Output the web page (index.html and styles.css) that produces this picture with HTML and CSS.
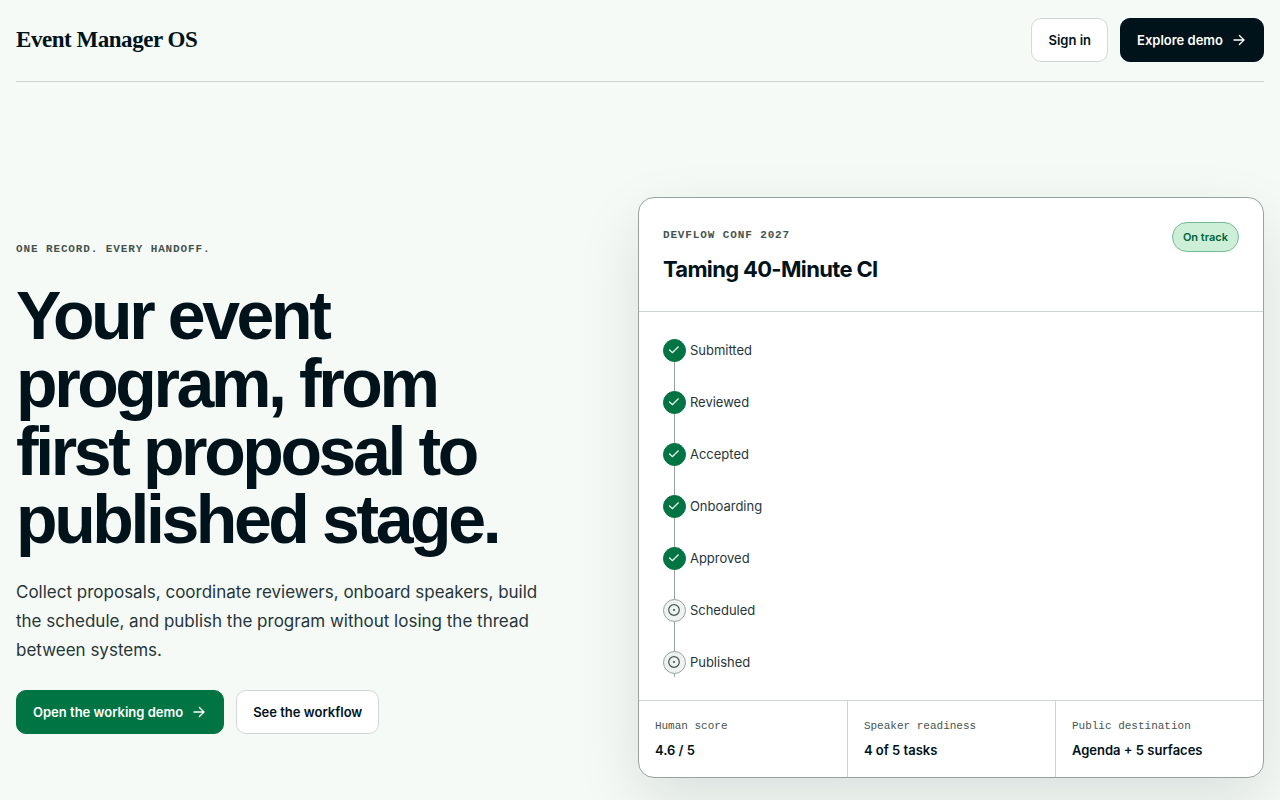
FILE: index.html
```html
<!DOCTYPE html>
<html lang="en">
<head>
<meta charset="utf-8">
<meta name="viewport" content="width=device-width, initial-scale=1">
<title>Event Manager OS</title>
<link rel="stylesheet" href="styles.css">
</head>
<body>
<svg class="sprite" aria-hidden="true">
  <symbol id="arrow" viewBox="0 0 16 16"><path d="M3 8h10M8.4 3.5 13 8l-4.6 4.5"/></symbol>
  <symbol id="check" viewBox="0 0 14 14"><path d="m2.6 7 2.7 2.7 6-5.9"/></symbol>
  <symbol id="target" viewBox="0 0 14 14"><circle cx="7" cy="7" r="5.3"/><circle cx="7" cy="7" r=".5"/></symbol>
</svg>
<header class="site-header">
  <a class="brand" href="#">Event Manager OS</a>
  <nav class="actions" aria-label="Account">
    <a class="button" href="#signin">Sign in</a>
    <a class="button button-dark" href="#demo">Explore demo <svg class="arrow" aria-hidden="true"><use href="#arrow"/></svg></a>
  </nav>
</header>
<main class="hero">
  <section class="intro">
    <p class="eyebrow">ONE RECORD. EVERY HANDOFF.</p>
    <h1 class="headline">Your event program, from first proposal to published stage.</h1>
    <p class="lead">Collect proposals, coordinate reviewers, onboard speakers, build the schedule, and publish the program without losing the thread between systems.</p>
    <div class="actions">
      <a class="button button-green" href="#demo">Open the working demo <svg class="arrow" aria-hidden="true"><use href="#arrow"/></svg></a>
      <a class="button" href="#workflow">See the workflow</a>
    </div>
  </section>
  <article class="card">
    <header class="card-header">
      <div>
        <p class="eyebrow">DEVFLOW CONF 2027</p>
        <h2 class="card-title">Taming 40-Minute CI</h2>
      </div>
      <span class="badge">On track</span>
    </header>
    <ol class="steps">
      <li class="step"><span class="marker marker-done"><svg class="glyph"><use href="#check"/></svg></span>Submitted</li>
      <li class="step"><span class="marker marker-done"><svg class="glyph"><use href="#check"/></svg></span>Reviewed</li>
      <li class="step"><span class="marker marker-done"><svg class="glyph"><use href="#check"/></svg></span>Accepted</li>
      <li class="step"><span class="marker marker-done"><svg class="glyph"><use href="#check"/></svg></span>Onboarding</li>
      <li class="step"><span class="marker marker-done"><svg class="glyph"><use href="#check"/></svg></span>Approved</li>
      <li class="step"><span class="marker"><svg class="glyph"><use href="#target"/></svg></span>Scheduled</li>
      <li class="step"><span class="marker"><svg class="glyph"><use href="#target"/></svg></span>Published</li>
    </ol>
    <dl class="facts">
      <div class="fact"><dt>Human score</dt><dd>4.6 / 5</dd></div>
      <div class="fact"><dt>Speaker readiness</dt><dd>4 of 5 tasks</dd></div>
      <div class="fact"><dt>Public destination</dt><dd>Agenda + 5 surfaces</dd></div>
    </dl>
  </article>
</main>
</body>
</html>
```
FILE: styles.css
```css
:root {
  --ink: #00121a;
  --body: #26353a;
  --muted: #46544f;
  --line: #ccd3d0;
  --line-strong: #98a3a0;
  --green: #007442;
  --page: #f5faf6;
  --sans: Inter, "Liberation Sans", sans-serif;
  --display: "Liberation Sans", Arial, sans-serif;
  --mono: "Liberation Mono", monospace;
}
* { box-sizing: border-box; }
body {
  margin: 0;
  padding: 0 16px;
  background: var(--page);
  color: var(--ink);
  font-family: var(--sans);
}
h1, h2, p, ol, dl, dd { margin: 0; padding: 0; }
.sprite { display: none; }

.site-header {
  display: flex;
  align-items: center;
  justify-content: space-between;
  padding: 18px 0 19px;
  border-bottom: 1px solid var(--line);
}
.brand {
  color: var(--ink);
  font: bold 23px/32px "Liberation Serif", serif;
  letter-spacing: -0.02em;
  text-decoration: none;
}
.actions { display: flex; flex-wrap: wrap; gap: 12px; }
.button {
  display: inline-flex;
  align-items: center;
  gap: 8px;
  min-height: 44px;
  padding: 0 16px;
  border: 1px solid #d3d9d8;
  border-radius: 10px;
  background: #fff;
  color: var(--ink);
  font-size: 13px;
  font-weight: 600;
  line-height: 20px;
  text-decoration: none;
}
.button-dark { background: var(--ink); border-color: var(--ink); color: #fff; }
.button-green { background: var(--green); border-color: var(--green); color: #fff; }
.arrow, .glyph { fill: none; stroke: currentColor; stroke-linecap: round; stroke-linejoin: round; }
.arrow { width: 16px; height: 16px; stroke-width: 1.3; }
.glyph { width: 14px; height: 14px; stroke-width: 1.2; }

.hero {
  display: grid;
  grid-template-columns: 11fr 12fr;
  align-items: center;
  gap: 48px;
  padding: 115px 0;
}
.eyebrow {
  color: var(--muted);
  font: bold 11px/16px var(--mono);
  letter-spacing: 0.08em;
}
.headline {
  max-width: 540px;
  margin-top: 24px;
  font-family: var(--display);
  font-size: 68px;
  font-weight: 700;
  line-height: 68px;
  letter-spacing: -0.05em;
}
.lead {
  max-width: 540px;
  margin: 25px 0;
  color: var(--body);
  font-size: 17px;
  line-height: 29px;
}

.card {
  overflow: hidden;
  border: 1px solid var(--line-strong);
  border-radius: 16px;
  background: #fff;
  box-shadow: 0 24px 64px rgba(0, 18, 26, 0.11);
}
.card-header {
  display: flex;
  align-items: flex-start;
  justify-content: space-between;
  padding: 24px 24px 27px;
  border-bottom: 1px solid var(--line);
}
.card-header .eyebrow { padding-top: 5px; }
.card-title {
  margin-top: 12px;
  font-size: 22px;
  font-weight: 700;
  line-height: 29px;
  letter-spacing: -0.03em;
}
.badge {
  padding: 6px 10px;
  border: 1px solid #76b996;
  border-radius: 15px;
  background: #cdefd8;
  color: #006439;
  font-size: 11px;
  font-weight: 600;
  line-height: 16px;
}
.steps {
  display: grid;
  gap: 24px;
  padding: 24px;
  list-style: none;
}
.step {
  position: relative;
  display: flex;
  align-items: center;
  gap: 4px;
  height: 28px;
  color: var(--body);
  font-size: 13px;
  line-height: 20px;
}
.step::before {
  content: "";
  position: absolute;
  top: 14px;
  bottom: -38px;
  left: 11px;
  width: 1px;
  background: var(--line-strong);
}
.step:last-child::before { bottom: -1px; }
.marker {
  position: relative;
  display: grid;
  place-items: center;
  width: 23px;
  height: 23px;
  border: 1px solid var(--line-strong);
  border-radius: 50%;
  background: #eef3f1;
  color: var(--muted);
}
.marker-done { border-color: var(--green); background: var(--green); color: #fff; }
.facts {
  display: grid;
  grid-template-columns: repeat(3, 1fr);
  border-top: 1px solid var(--line);
}
.fact { padding: 16px 16px 18px; }
.fact + .fact { border-left: 1px solid var(--line); }
.fact dt {
  color: var(--muted);
  font: 11px/18px var(--mono);
}
.fact dd {
  margin-top: 6px;
  font-size: 13px;
  font-weight: 600;
  line-height: 18px;
}
```
